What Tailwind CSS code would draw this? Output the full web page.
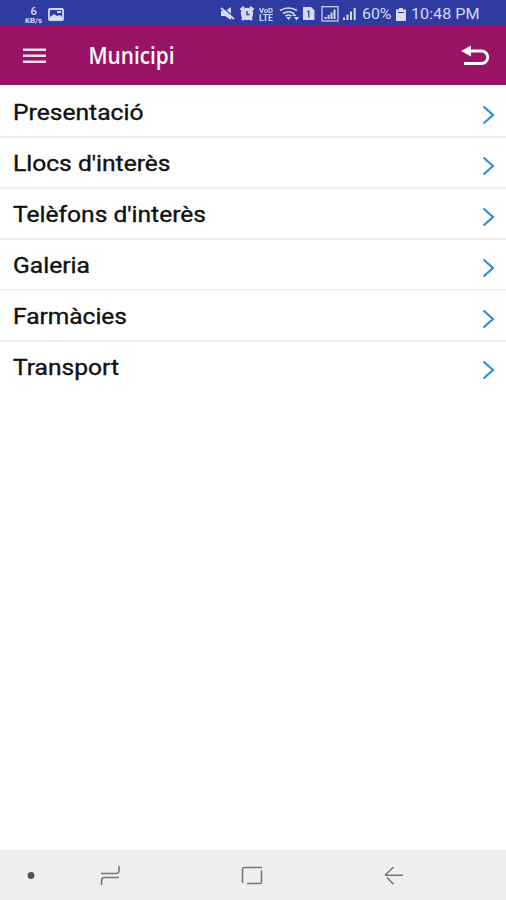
<!DOCTYPE html>
<html lang="ca">
<head>
  <meta charset="UTF-8">
  <meta name="viewport" content="width=device-width, initial-scale=1.0">
  <title>Municipi</title>
  <script src="https://cdn.jsdelivr.net/npm/@tailwindcss/browser@4"></script>
</head>
<body class="bg-white font-['Roboto',sans-serif]">
  <div class="w-[506px] h-[900px] flex flex-col overflow-hidden">
    <!-- Barra d'estat -->
    <div class="h-[26px] shrink-0 bg-[#2f3ba0] text-[#d5dbf5] flex items-center pl-[24px] pr-[26px] pt-[2px]">
      <svg class="w-[19px] h-[20px] shrink-0 overflow-visible" viewBox="0 0 19 20" fill="currentColor">
        <text x="6.500" y="11" class="text-[11px] font-medium">6</text>
        <text x="1" y="18.500" class="text-[6.500px] font-bold" textLength="17" lengthAdjust="spacingAndGlyphs">KB/s</text>
      </svg>
      <svg class="w-[16px] h-[13px] ml-[5px]" viewBox="0 0 16 13">
        <rect x="1" y="1" width="14" height="11" rx="1" fill="none" stroke="currentColor" stroke-width="1.8"/>
        <path d="M2 11V9l4-3 3 2 3-1 2 2v2z" fill="currentColor"/>
        <path d="M9 3h4v2H9z" fill="currentColor"/>
      </svg>
      <div class="flex-1"></div>
      <svg class="w-[137px] h-[18px] shrink-0 mr-[5px] overflow-visible" viewBox="221 5 137 18" fill="currentColor">
        <!-- so silenciat -->
        <path d="M222 11h4l6-4v13l-6-4h-4z"/>
        <path d="M223 7l13 11" stroke="#2f3ba0" stroke-width="1.500"/>
        <path d="M222 8l13 11" stroke="currentColor" stroke-width="1.8"/>
        <!-- alarma -->
        <circle cx="248" cy="14" r="6.2"/>
        <path d="M241.500 10l3.500-3M254.500 10l-3.500-3M243 20l2-2M253 20l-2-2" stroke="currentColor" stroke-width="2.500"/>
        <path d="M248 11v3.500h2.500" fill="none" stroke="#2f3ba0" stroke-width="1.3"/>
        <text x="260" y="12.500" font-size="6.500" font-weight="700" textLength="14" lengthAdjust="spacingAndGlyphs">VoD</text>
        <text x="260" y="20.500" font-size="8.500" font-weight="700" textLength="14" lengthAdjust="spacingAndGlyphs">LTE</text>
        <!-- wifi -->
        <g fill="none" stroke="currentColor" stroke-width="1.700">
          <path d="M281 10.500q8.500-5 17 0M284 13.500q5.500-3.500 11 0M286.500 16q3-2 6 0"/>
        </g>
        <path d="M287 17h5l-2.500 3zM293 16l2.300-2.500 2 2.500zM295 17h5l-2.500 3.500z"/>
        <!-- sim -->
        <path d="M304 7h8l3.500 3.500V20H304z"/>
        <path d="M308 12l1.800-1v6.500" fill="none" stroke="#2f3ba0" stroke-width="1.200"/>
        <!-- cobertura -->
        <rect x="323" y="6.700" width="16" height="14.300" fill="none" stroke="currentColor" stroke-width="1.200"/>
        <path d="M325.500 17h2v2h-2zM328.500 15h2v4h-2zM331.500 12.500h2v6.500h-2zM334.500 9.500h2v9.500h-2z"/>
        <path d="M344 17.500h2v2.500h-2zM347.500 14.500h2v5.500h-2zM351 11.500h2v8.500h-2zM354.700 8h2v12h-2z"/>
      </svg>
      <svg class="w-[30px] h-[20px] shrink-0" viewBox="0 0 30 20" fill="currentColor">
        <text x="0" y="15" class="text-[15.500px]" textLength="29.500" lengthAdjust="spacingAndGlyphs">60%</text>
      </svg>
      <svg class="w-[10px] h-[13px] ml-[4px] shrink-0" viewBox="0 0 10 13" fill="currentColor">
        <path d="M3 0h4v1.500h3V13H0V1.500h3z"/>
        <path d="M2 4.500h6" stroke="#2f3ba0"/>
      </svg>
      <svg class="w-[69px] h-[20px] ml-[5px] shrink-0" viewBox="0 0 69 20" fill="currentColor">
        <text x="0" y="15" class="text-[15.500px]" textLength="68.500" lengthAdjust="spacingAndGlyphs">10:48 PM</text>
      </svg>
    </div>

    <!-- Capçalera -->
    <header class="h-[59px] shrink-0 bg-[#981265] text-white flex items-center pl-[23px] pr-[16px]">
      <svg class="w-[23px] h-[16px]" viewBox="0 0 23 16" fill="#f3dfec">
        <path d="M0 .5h23v2.500H0zM0 6.500h23v2.500H0zM0 12.500h23V15H0z"/>
      </svg>
      <h1 class="ml-[43px] flex-1">
        <svg class="w-[100px] h-[44px] block overflow-visible" viewBox="0 0 100 44" fill="currentColor">
          <text x="-.5" y="30" class="font-['Open_Sans',sans-serif] font-semibold text-[23px]" textLength="86" lengthAdjust="spacingAndGlyphs">Municipi</text>
        </svg>
      </h1>
      <svg class="w-[29px] h-[22px]" viewBox="0 0 29 22">
        <path d="M0 6l10-5.500v11z" fill="currentColor"/>
        <path d="M8 6h12.500a6 6 0 0 1 0 12.500H3" fill="none" stroke="currentColor" stroke-width="3"/>
      </svg>
    </header>

    <!-- Menú -->
    <main class="flex-1 pt-[2px]">
      <ul id="menu"></ul>
    </main>

    <!-- Barra de navegació -->
    <nav class="h-[50px] shrink-0 bg-[#efefef]">
      <svg class="w-full h-full" viewBox="0 850 506 50" fill="none" stroke="#777" stroke-width="1.600">
        <circle cx="31" cy="875.500" r="3.400" fill="#555" stroke="none"/>
        <path d="M101 873.500h15q3 0 3-3V866"/>
        <path d="M119 877.500h-14.500q-3 0-3 3v4.500"/>
        <path d="M242.500 883v-13.500q0-2 2-2H262"/>
        <path d="M261.500 870.500v11q0 2-2 2H247"/>
        <path d="M403 875.300h-18M393.500 867l-8.500 8.300M387 877.500l6.500 6.700"/>
      </svg>
    </nav>
  </div>

  <script>
    const items = [
      { text: 'Presentació', width: 130.5 },
      { text: "Llocs d'interès", width: 157.5 },
      { text: "Telèfons d'interès", width: 193 },
      { text: 'Galeria', width: 77 },
      { text: 'Farmàcies', width: 114 },
      { text: 'Transport', width: 106 },
    ];

    document.getElementById('menu').innerHTML = items.map(item => `
      <li class="h-[51.100px] flex items-center justify-between pl-[13px] pr-[11px] border-b-2 border-[#efefef] last:border-transparent">
        <svg class="w-[210px] h-[40px]" viewBox="0 0 210 40" fill="#111" stroke="#111" stroke-width=".35">
          <text x="0" y="28" class="text-[21.500px] font-normal" textLength="${item.width}" lengthAdjust="spacingAndGlyphs">${item.text}</text>
        </svg>
        <svg class="w-[13px] h-[20px] mt-[6px]" viewBox="0 0 13 20">
          <path d="M1.500 1.500l9.500 8.500-9.500 8.500" fill="none" stroke="#2b8fdc" stroke-width="2.200"/>
        </svg>
      </li>`).join('');
  </script>
</body>
</html>
